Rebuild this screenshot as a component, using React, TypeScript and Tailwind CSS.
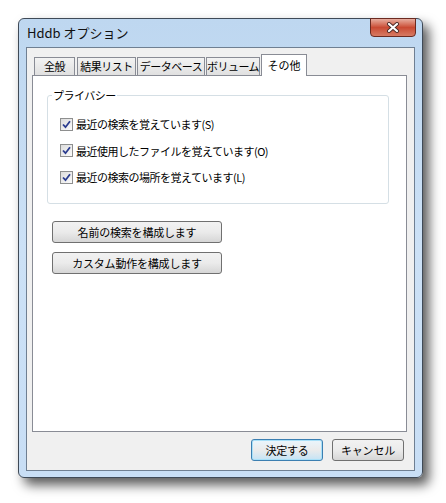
import React from "react";

const font = { fontFamily: '"Noto Sans CJK JP", "Liberation Sans", sans-serif' };

const tabs = [
    { label: "全般", w: "w-[41px]", ml: "ml-[2px]" },
    { label: "結果リスト", w: "w-[59px]", ml: "ml-[2px]" },
    { label: "データベース", w: "w-[68px]", ml: "ml-[1px]" },
    { label: "ボリューム", w: "w-[54px]", ml: "ml-[1px]" },
];

const checks = [
    { text: "最近の検索を覚えています", key: "S" },
    { text: "最近使用したファイルを覚えています", key: "O" },
    { text: "最近の検索の場所を覚えています", key: "L" },
];

const CheckBox = () => (
    <div className="w-[13px] h-[13px] border border-[#8e8f8f] bg-gradient-to-br from-[#dcdcdc] to-[#fbfbfb] flex items-center justify-center shrink-0">
        <svg width="9" height="9" viewBox="0 0 9 9">
            <path d="M1 4.5 L3.5 7.2 L8 1.2" fill="none" stroke="#2a3c8f" strokeWidth="1.8" />
        </svg>
    </div>
);

const Button = ({ label, className = "" }: { label: string; className?: string }) => (
    <div className={`h-[22px] rounded-[3px] border border-[#707070] bg-gradient-to-b from-[#f2f2f2] via-[#ebebeb] to-[#d6d6d6] flex items-center justify-center text-[11px] tracking-[-0.2px] whitespace-nowrap text-black ${className}`}>
        {label}
    </div>
);

export default function App() {
    return (
        <div className="w-[446px] h-[503px] bg-white pt-[18px] pl-[18px]" style={font}>
            <div className="relative w-[405px] h-[460px] rounded-[6px] border border-[#3f4a57] bg-gradient-to-b from-[#bed7f0] via-[#cce1f6] to-[#c8def5] shadow-[6px_7px_12px_rgba(0,0,0,0.65)] flex flex-col">
                {/* title bar */}
                <div className="h-[28px] flex items-center pl-[8px] text-[13px] text-[#111]">Hddb オプション</div>
                <div className="absolute top-[-1px] right-[6px] w-[46px] h-[19px] rounded-b-[4px] border border-[#6b2a20] bg-gradient-to-b from-[#e6ad9f] via-[#c94a33] to-[#d77a63] flex items-center justify-center">
                    <svg width="16" height="11" viewBox="0 0 16 11">
                        <path d="M4 2 L12 9 M12 2 L4 9" stroke="#4a2a26" strokeWidth="4" strokeLinecap="round" />
                        <path d="M4 2 L12 9 M12 2 L4 9" stroke="#ffffff" strokeWidth="2.2" strokeLinecap="round" />
                    </svg>
                </div>
                {/* client area */}
                <div className="mx-[7px] mb-[6px] flex-1 border border-[#6f7f92] bg-[#f0f0f0] flex flex-col pt-[6px] pl-[5px] pr-[7px]">
                    <div className="flex items-end h-[21px] relative z-10">
                        {tabs.map((t) => (
                            <div
                                key={t.label}
                                className={`${t.w} ${t.ml} h-[18px] border border-b-0 border-[#898c95] bg-gradient-to-b from-[#f3f3f3] to-[#e0e0e0] flex items-center justify-center text-[11px] tracking-[-0.5px] whitespace-nowrap text-black`}
                            >
                                {t.label}
                            </div>
                        ))}
                        <div className="w-[46px] ml-[1px] h-[22px] -mb-px border border-b-0 border-[#898c95] bg-white flex items-center justify-center text-[11px] whitespace-nowrap text-black">
                            その他
                        </div>
                    </div>
                    <div className="h-[357px] border border-[#898c95] bg-white flex flex-col">
                        <div className="relative mt-[19px] ml-[14px] w-[342px] h-[109px] rounded-[3px] border border-[#d5dfe5] flex flex-col pl-[12px] pt-[20px] gap-[10px]">
                            <div className="absolute left-[4px] top-[-9px] bg-white px-[1px] text-[11px] tracking-[-0.5px] leading-[16px] text-black">プライバシー</div>
                            {checks.map((c) => (
                                <div key={c.key} className="flex items-center gap-[3px] h-[16.5px] text-[11px] tracking-[-0.5px] whitespace-nowrap text-black">
                                    <CheckBox />
                                    <span>
                                        {c.text}({c.key})
                                    </span>
                                </div>
                            ))}
                        </div>
                        <div className="ml-[19px] mt-[17px] flex flex-col gap-[9px]">
                            <Button label="名前の検索を構成します" className="w-[170px]" />
                            <Button label="カスタム動作を構成します" className="w-[170px]" />
                        </div>
                    </div>
                    <div className="flex justify-end gap-[9px] mt-[7px] pr-[3px]">
                        <Button label="決定する" className="w-[72px] !border-[#3c7fb1] shadow-[0_0_0_1px_#a9e0f8_inset] !from-[#eaf6fd] !to-[#c4e3f5]" />
                        <Button label="キャンセル" className="w-[72px]" />
                    </div>
                </div>
            </div>
        </div>
    );
}
